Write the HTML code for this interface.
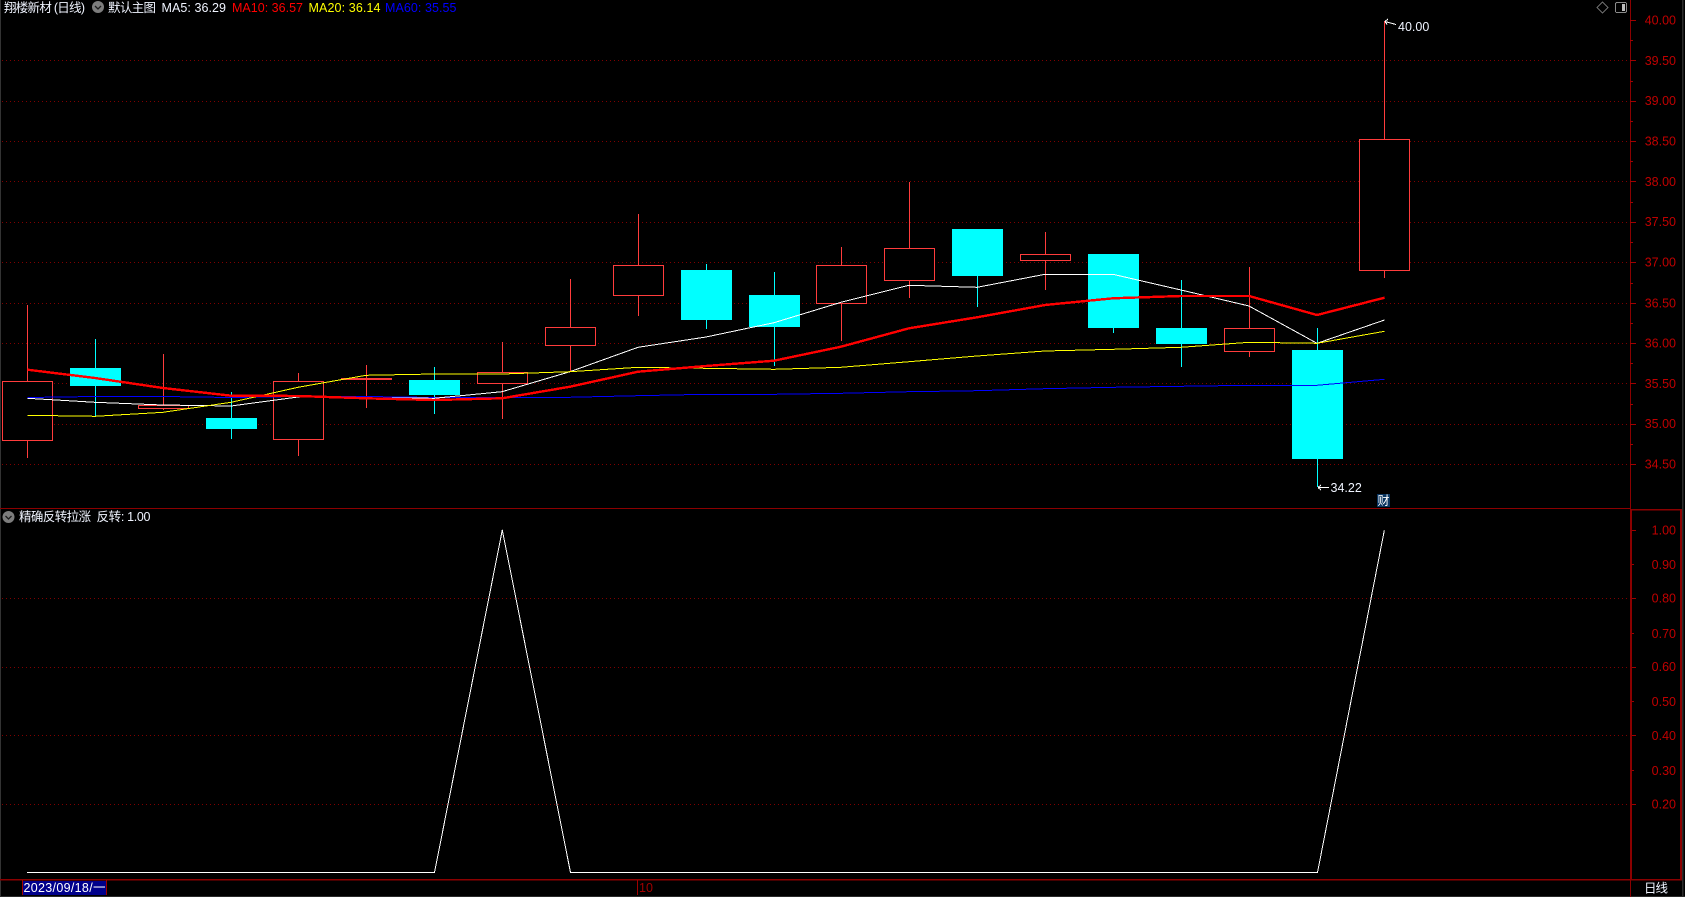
<!DOCTYPE html>
<html lang="zh-CN"><head><meta charset="utf-8"><title>K线</title>
<style>
html,body{margin:0;padding:0;background:#000;width:1685px;height:897px;overflow:hidden}
svg{display:block;position:absolute;left:0;top:0}
text{font-family:"Liberation Sans","Noto Sans CJK SC",sans-serif;font-size:12.5px}
.ax{fill:#c00000;text-anchor:end}
.g{stroke:#800000;stroke-width:1;stroke-dasharray:1 3;fill:none}
.t{stroke:#a00000;stroke-width:1;fill:none}
.w{fill:#f0f4ff}
</style></head><body>
<svg width="1685" height="897" viewBox="0 0 1685 897" xmlns="http://www.w3.org/2000/svg">
<rect width="1685" height="897" fill="#000"/>
<rect x="0" y="0" width="1" height="897" fill="#333"/>
<rect x="1682" y="0" width="1.5" height="897" fill="#2c2c2c"/>
<rect x="0" y="896" width="1685" height="1" fill="#2a2a2a"/>
<g shape-rendering="crispEdges">
<!-- grid -->
<g class="g">
<path d="M2 60.5H1630M2 101.5H1630M2 141.5H1630M2 181.5H1630M2 222.5H1630M2 262.5H1630M2 303.5H1630M2 343.5H1630M2 383.5H1630M2 424.5H1630M2 464.5H1630"/>
<path d="M2 598.5H1630M2 667.5H1630M2 735.5H1630M2 804.5H1630"/>
</g>
<!-- frame -->
<g fill="#8b0000">
<rect x="1630" y="0" width="1" height="897"/>
<rect x="0" y="508" width="1630" height="1"/>
<rect x="0" y="879" width="1682" height="1.600"/>
<rect x="1630" y="509" width="2" height="371"/>
<rect x="1680" y="509" width="2" height="371"/>
<rect x="1630" y="509" width="52" height="1.600"/>
</g>
<!-- axis ticks -->
<g class="t">
<path d="M1630 20.5H1636M1630 60.5H1636M1630 101.5H1636M1630 141.5H1636M1630 181.5H1636M1630 222.5H1636M1630 262.5H1636M1630 303.5H1636M1630 343.5H1636M1630 383.5H1636M1630 424.5H1636M1630 464.5H1636"/>
<path d="M1630 40.5H1633M1630 81.5H1633M1630 121.5H1633M1630 161.5H1633M1630 202.5H1633M1630 242.5H1633M1630 283.5H1633M1630 323.5H1633M1630 363.5H1633M1630 404.5H1633M1630 444.5H1633"/>
<path d="M1632 530.5H1636M1632 598.5H1636M1632 667.5H1636M1632 735.5H1636M1632 804.5H1636"/>
<path d="M1632 564.5H1634M1632 633.5H1634M1632 701.5H1634M1632 770.5H1634"/>
<path d="M637.5 880V895"/>
</g>
<!-- wicks -->
<g stroke="#ff3c3c" stroke-width="1" fill="none">
<path d="M27.5 305V458M163.5 354V410M298.5 373V456M366.5 365V408M502.5 342V419M570.5 279V372M638.5 214V316M841.5 247V341M909.5 182V298M1045.5 232V290M1249.5 267V357M1384.5 21V278"/>
</g>
<g stroke="#00ffff" stroke-width="1" fill="none">
<path d="M95.5 339V416M231.5 392V439M434.5 367V414M706.5 264V329M774.5 272V366M977.5 276V307M1113.5 328V333M1181.5 280V367M1317.5 328V487"/>
</g>
<!-- red bodies -->
<g fill="#000" stroke="#ff3c3c" stroke-width="1">
<rect x="2.5" y="381.5" width="50" height="59"/>
<rect x="138.5" y="405.5" width="50" height="3"/>
<rect x="273.5" y="381.5" width="50" height="58"/>
<rect x="341.5" y="378.5" width="50" height="1"/>
<rect x="477.5" y="372.5" width="50" height="11"/>
<rect x="545.5" y="327.5" width="50" height="18"/>
<rect x="613.5" y="265.5" width="50" height="30"/>
<rect x="816.5" y="265.5" width="50" height="38"/>
<rect x="884.5" y="248.5" width="50" height="32"/>
<rect x="1020.5" y="254.5" width="50" height="6"/>
<rect x="1224.5" y="328.5" width="50" height="23"/>
<rect x="1359.5" y="139.5" width="50" height="131"/>
</g>
<!-- cyan bodies -->
<g fill="#00ffff">
<rect x="70" y="368" width="51" height="18"/>
<rect x="206" y="418" width="51" height="11"/>
<rect x="409" y="380" width="51" height="15"/>
<rect x="681" y="270" width="51" height="50"/>
<rect x="749" y="295" width="51" height="32"/>
<rect x="952" y="229" width="51" height="47"/>
<rect x="1088" y="254" width="51" height="74"/>
<rect x="1156" y="328" width="51" height="16"/>
<rect x="1292" y="350" width="51" height="109"/>
</g>
<!-- MA lines -->
<g fill="none" stroke-linejoin="round">
<polyline stroke="#0000ff" stroke-width="1" points="27.5,397.5 95,396.5 163,396.5 231,397.5 298,396.5 366,396.5 434,397.500 502,397.5 560,397.5 638,395.7 706,394.3 774,394.3 841,393.3 909,391.7 977,390.7 1045,388.7 1113,387.3 1181,386.3 1249,385.3 1317,385.3 1384.5,379.3"/>
<polyline stroke="#ffffff" stroke-width="1" points="27.5,398.3 95,402.3 163,405 231,406 298,397 366,397.7 434,398.3 502,391.7 570,371.7 638,347.3 706,337 774,322.7 841,302.3 909,285.3 977,287.3 1045,274.3 1113,274.3 1181,290 1249,306 1317,343.3 1384.5,320"/>
<polyline stroke="#ffff00" stroke-width="1" points="27.5,415.3 95,416.3 163,412.3 231,402.3 298,387.3 366,375.3 434,374 502,374 570,371.7 638,367.3 706,368.3 774,369.3 841,367.3 909,361.7 977,356 1045,351 1113,349.3 1181,347.3 1249,342.3 1317,343.3 1384.5,331.3"/>
<polyline stroke="#ff0000" stroke-width="2.4" points="27.5,369.7 95,378 163,388 231,395.7 298,396 366,398.3 434,400 502,398.3 570,386.7 638,371.7 706,366 774,360.7 841,346.7 909,328.3 977,317.3 1045,305 1113,298.3 1181,296 1249,296 1317,315 1384.5,297.7"/>
<!-- indicator -->
<polyline stroke="#ffffff" stroke-width="1" points="27,872.5 434.5,872.5 502.3,530 570.5,872.5 1317.5,872.5 1384.3,530.5"/>
<!-- high / low arrows -->
<path d="M1385 21.5L1396 24.5M1385 21.5L1388 19M1385 21.5L1387 24.5" stroke="#ffffff" stroke-width="1"/>
<path d="M1318 487.5H1329M1318 487.5L1321 485M1318 487.5L1321 490" stroke="#ffffff" stroke-width="1"/>
</g>
<!-- date box -->
<rect x="22" y="881" width="85" height="14" fill="#00008b"/>
<path d="M22.5 880V895M106.5 880V895" stroke="#a00000" stroke-width="1"/>
<rect x="1377" y="494" width="13" height="13" fill="#0a3560"/>
<!-- top right icons -->
<path d="M1602.5 2L1608 7.5L1602.5 13L1597 7.5Z" fill="none" stroke="#6a6a6a" stroke-width="1"/>
<rect x="1615.5" y="2.5" width="11" height="10" rx="1.5" fill="#000" stroke="#8a8a8a" stroke-width="1"/>
<rect x="1622" y="4" width="3" height="7" fill="#bdbdbd"/>
</g>
<!-- collapse icons -->
<circle cx="98" cy="7" r="6" fill="#7d7d7d"/>
<path d="M95 6L98 9L101 6" fill="none" stroke="#1c1c1c" stroke-width="1.3"/>
<circle cx="8.5" cy="517" r="6" fill="#7d7d7d"/>
<path d="M5.5 516L8.5 519L11.5 516" fill="none" stroke="#1c1c1c" stroke-width="1.3"/>
<!-- header -->
<text x="4" y="12" class="w" font-size="12" textLength="81" lengthAdjust="spacing">翔楼新材 (日线)</text>
<text x="108" y="12" class="w" textLength="48" lengthAdjust="spacing">默认主图</text>
<text x="161.5" y="12" class="w" textLength="64.5" lengthAdjust="spacing">MA5: 36.29</text>
<text x="232" y="12" fill="#ff0000" textLength="71" lengthAdjust="spacing">MA10: 36.57</text>
<text x="308.5" y="12" fill="#ffff00" textLength="72" lengthAdjust="spacing">MA20: 36.14</text>
<text x="385" y="12" fill="#0000ff" textLength="71.5" lengthAdjust="spacing">MA60: 35.55</text>
<text x="19" y="521" class="w" textLength="72" lengthAdjust="spacing">精确反转拉涨</text>
<text x="96.5" y="521" class="w" textLength="54" lengthAdjust="spacing">反转: 1.00</text>
<!-- axis labels -->
<g class="ax">
<text x="1676" y="24.500">40.00</text>
<text x="1676" y="65">39.50</text>
<text x="1676" y="105">39.00</text>
<text x="1676" y="145.500">38.50</text>
<text x="1676" y="186">38.00</text>
<text x="1676" y="226">37.50</text>
<text x="1676" y="266.500">37.00</text>
<text x="1676" y="307.500">36.50</text>
<text x="1676" y="347.500">36.00</text>
<text x="1676" y="388">35.50</text>
<text x="1676" y="428">35.00</text>
<text x="1676" y="468.500">34.50</text>
<text x="1676" y="534.500">1.00</text>
<text x="1676" y="569">0.90</text>
<text x="1676" y="602.500">0.80</text>
<text x="1676" y="638">0.70</text>
<text x="1676" y="671">0.60</text>
<text x="1676" y="706">0.50</text>
<text x="1676" y="740">0.40</text>
<text x="1676" y="775">0.30</text>
<text x="1676" y="808.500">0.20</text>
</g>
<text x="1398" y="31" class="w">40.00</text>
<text x="1330.500" y="492" class="w">34.22</text>
<text x="1377.500" y="505" fill="#ffffff" font-size="12" textLength="12" lengthAdjust="spacingAndGlyphs">财</text>
<text x="23.500" y="892" fill="#ffffff" textLength="82" lengthAdjust="spacing">2023/09/18/一</text>
<text x="639" y="892" fill="#a00000">10</text>
<text x="1644" y="892.500" class="w" textLength="24" lengthAdjust="spacing">日线</text>
</svg>
</body></html>
